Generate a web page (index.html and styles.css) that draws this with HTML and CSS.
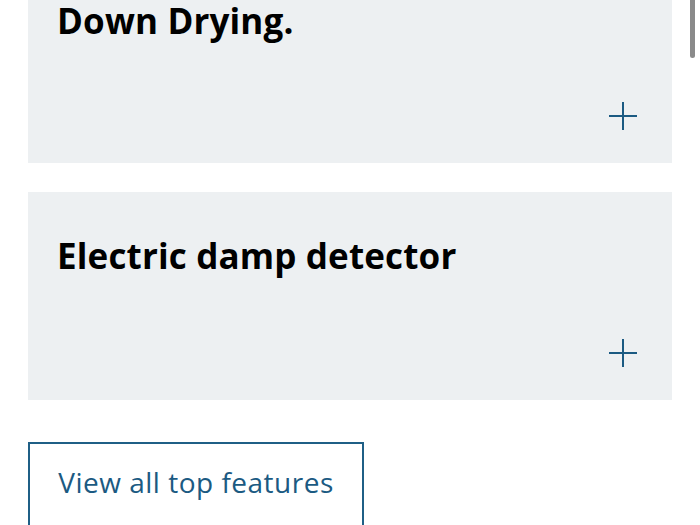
FILE: index.html
```html
<!DOCTYPE html>
<html>
<head>
<meta charset="utf-8">
<link rel="stylesheet" href="styles.css">
</head>
<body>
<main class="page">
  <section class="card card-first">
    <h2 class="title title-first">Down Drying.</h2>
    <span class="plus" aria-hidden="true">
      <svg width="28" height="28" viewBox="0 0 28 28"><path d="M14 0V28M0 14H28" stroke="currentColor" stroke-width="2" fill="none"/></svg>
    </span>
  </section>
  <section class="card card-second">
    <h2 class="title">Electric damp detector</h2>
    <span class="plus" aria-hidden="true">
      <svg width="28" height="28" viewBox="0 0 28 28"><path d="M14 0V28M0 14H28" stroke="currentColor" stroke-width="2" fill="none"/></svg>
    </span>
  </section>
  <a class="button" href="#">View all top features</a>
</main>
<div class="scrollbar"></div>
</body>
</html>
```
FILE: styles.css
```css
html, body {
  margin: 0;
  padding: 0;
  background: #ffffff;
  overflow: hidden;
}
.page {
  display: flex;
  flex-direction: column;
  align-items: flex-start;
  padding: 0 28px;
  font-family: "Open Sans", "Liberation Sans", sans-serif;
}
.card {
  box-sizing: border-box;
  align-self: stretch;
  background: #edf0f2;
  display: flex;
  flex-direction: column;
  padding: 0 35px 33px 29px;
}
.card-first {
  height: 163px;
  padding-top: 4px;
}
.card-second {
  height: 208px;
  margin-top: 29px;
  padding-top: 43px;
}
.title {
  margin: 0;
  font-size: 35px;
  line-height: 42px;
  font-weight: 700;
  letter-spacing: 0.15px;
  color: #000000;
}
.title-first {
  line-height: 34px;
}
.plus {
  margin-top: auto;
  align-self: flex-end;
  width: 28px;
  height: 28px;
  color: #1b5a82;
  display: block;
}
.plus svg {
  display: block;
}
.button {
  margin-top: 42px;
  box-sizing: border-box;
  width: 336px;
  height: 100px;
  border: 2px solid #1f5f86;
  color: #1b5a82;
  text-decoration: none;
  font-size: 28px;
  font-weight: 400;
  letter-spacing: 0.5px;
  padding: 19px 0 0 0;
  text-align: center;
  line-height: 38px;
}
.scrollbar {
  position: fixed;
  top: 0;
  right: 5px;
  width: 5px;
  height: 58px;
  border-radius: 0 0 3px 3px;
  background: #8a8a8a;
}
```
